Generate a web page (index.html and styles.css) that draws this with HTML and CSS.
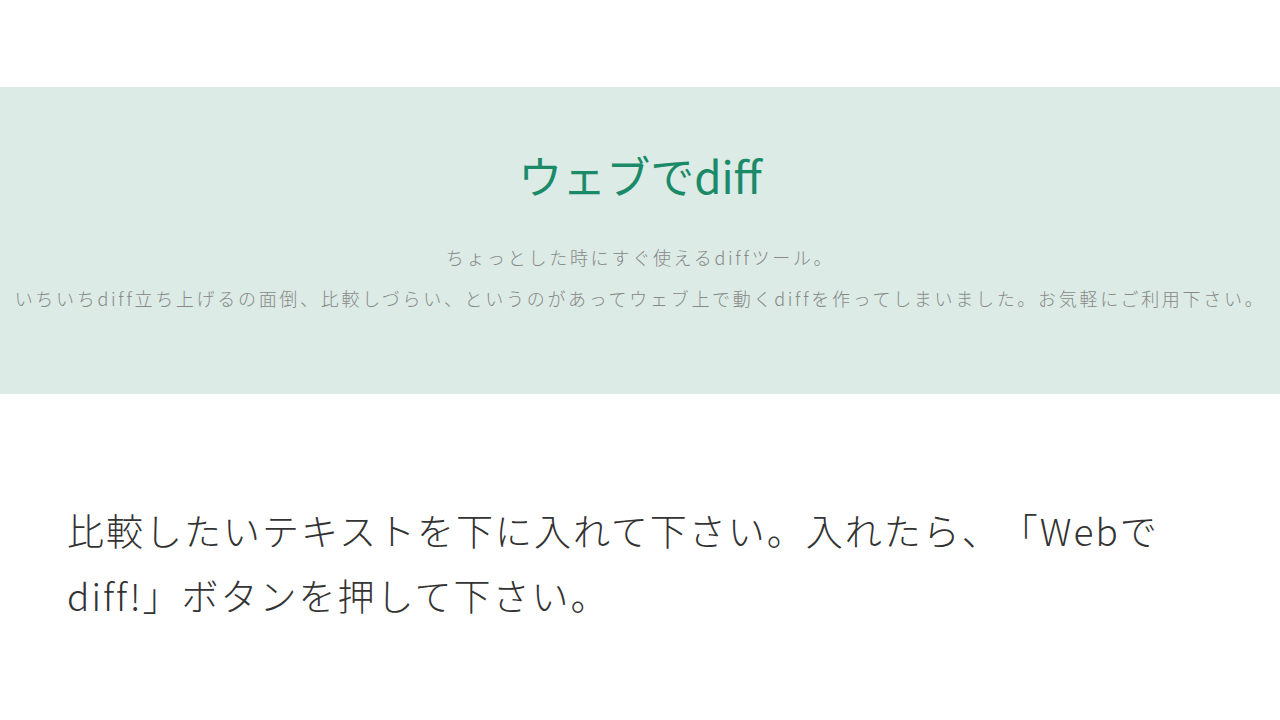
FILE: index.html
```html
<!DOCTYPE html>
<html lang="ja">
<head>
    <meta charset="UTF-8">
    <meta name="viewport" content="width=device-width, initial-scale=1.0">
    <title>ウェブでdiff</title>
    <link rel="stylesheet" href="styles.css">
</head>
<body>
    <header class="topbar"></header>

    <section class="hero">
        <h1 class="hero-title">ウェブでdiff</h1>
        <p class="hero-lead">
            ちょっとした時にすぐ使えるdiffツール。<br>
            いちいちdiff立ち上げるの面倒、比較しづらい、というのがあってウェブ上で動くdiffを作ってしまいました。お気軽にご利用下さい。
        </p>
    </section>

    <main class="content">
        <h2 class="guide">比較したいテキストを下に入れて下さい。入れたら、「Webでdiff!」ボタンを押して下さい。</h2>
    </main>
</body>
</html>
```

FILE: styles.css
```css
body {
    margin: 0;
    font-family: "Noto Sans CJK JP", "Noto Sans", sans-serif;
    color: #333;
    background: #fff;
    text-spacing-trim: space-all;
}

.topbar { height: 87px; }

.hero {
    background-color: #dcebe5;
    text-align: center;
    padding: 62px 0 75px;
}

.hero-title {
    margin: 0;
    font-size: 44px;
    line-height: 53px;
    font-weight: 400;
    color: #1b8a69;
}

.hero-lead {
    margin: 35px 0 0;
    font-size: 18px;
    line-height: 41px;
    font-weight: 300;
    letter-spacing: 2.7px;
    color: #888;
}

.content {
    padding: 104px 67px 0;
}

.guide {
    margin: 0;
    max-width: 1110px;
    font-size: 37px;
    line-height: 65px;
    font-weight: 300;
    letter-spacing: 2px;
    color: #333;
}
```
